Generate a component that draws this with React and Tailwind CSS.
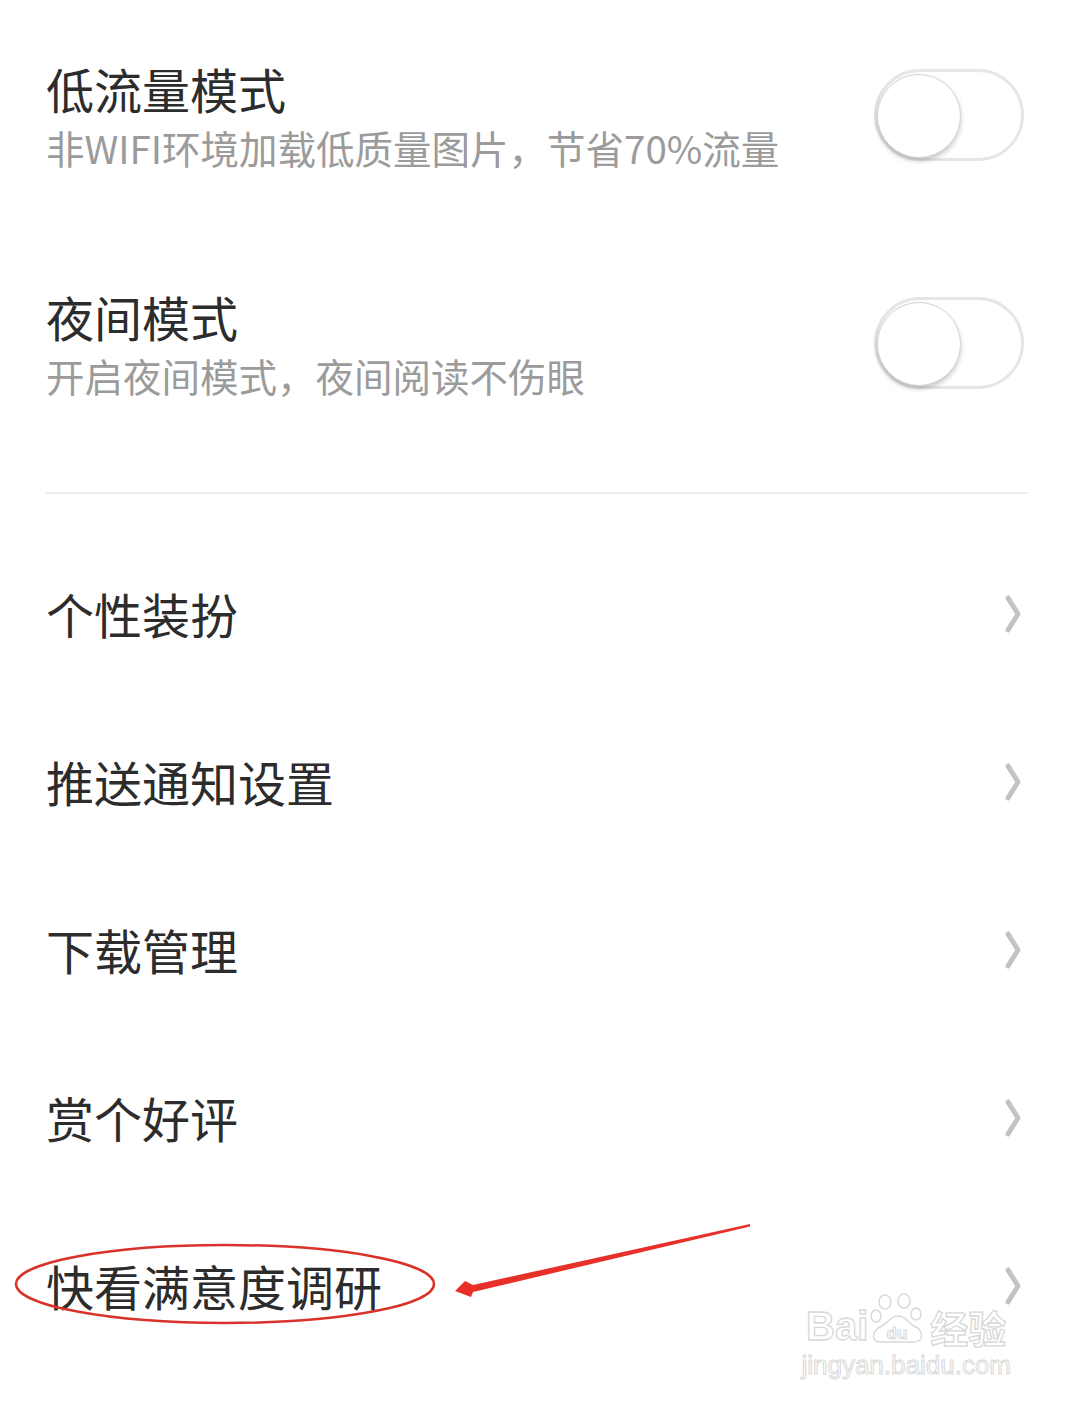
import React from 'react';

const font = { fontFamily: '"Noto Sans CJK SC", "Noto Sans", sans-serif' };

const Toggle = () => (
  <div className="relative h-[92px] w-[150px] rounded-full border-[3px] border-[#e6e6e6] bg-white">
    <div className="absolute left-[0px] top-[2px] h-[84px] w-[84px] rounded-full border border-[#d4d4d4] bg-white shadow-[0_3px_5px_rgba(0,0,0,0.22)]" />
  </div>
);

const Chevron = () => (
  <svg width="22" height="40" viewBox="0 0 22 40" className="mr-[1px]">
    <polyline points="6,4 16,20 6,36" fill="none" stroke="#c3c3c3" strokeWidth="5" strokeLinecap="round" strokeLinejoin="round" />
  </svg>
);

const SwitchRow = ({ title, desc }) => (
  <div className="flex h-[228px] items-center justify-between">
    <div className="flex flex-col">
      <div className="text-[48px] leading-[1.2] text-[#2c2c2c]">{title}</div>
      <div className="mt-[6px] text-[38.5px] leading-[1.2] text-[#9b9b9b]">{desc}</div>
    </div>
    <div className="mr-[1px]">
      <Toggle />
    </div>
  </div>
);

const LinkRow = ({ title, children }) => (
  <div className="relative flex h-[168px] items-center justify-between">
    <div className="text-[48px] leading-[1.2] text-[#2c2c2c]">{title}</div>
    <Chevron />
    {children}
  </div>
);

const Watermark = () => (
  <div className="pointer-events-none absolute right-[58px] bottom-[26px] flex flex-col items-center" style={font}>
    <div className="flex items-end">
      <span className="text-[40px] font-bold leading-none text-transparent [-webkit-text-stroke:1.3px_#d8d8d8]" style={{ fontFamily: '"Liberation Sans", sans-serif' }}>Bai</span>
      <svg width="62" height="58" viewBox="0 0 62 58" className="-mb-[4px]">
        <g fill="none" stroke="#d8d8d8" strokeWidth="1.4">
          <ellipse cx="17" cy="10" rx="6" ry="7" />
          <ellipse cx="36" cy="9" rx="6" ry="7" />
          <ellipse cx="8" cy="24" rx="5" ry="6" />
          <ellipse cx="48" cy="22" rx="5" ry="6" />
          <path d="M12 50 C2 50 4 38 14 34 C20 31 22 24 30 24 C38 24 40 31 46 34 C56 38 56 50 46 50 Z" />
        </g>
        <text x="29" y="47" textAnchor="middle" fontSize="17" fontWeight="700" fill="none" stroke="#d8d8d8" strokeWidth="1" fontFamily="Liberation Sans, sans-serif">du</text>
      </svg>
      <span className="text-[38px] font-bold leading-none text-transparent [-webkit-text-stroke:1.3px_#d8d8d8]">经验</span>
    </div>
    <span className="mt-[6px] text-[26px] leading-none text-transparent [-webkit-text-stroke:1px_#d8d8d8]" style={{ fontFamily: '"Liberation Sans", sans-serif' }}>jingyan.baidu.com</span>
  </div>
);

export default function App() {
  return (
    <div className="relative h-[1404px] w-[1069px] overflow-hidden bg-white" style={font}>
      <div className="pl-[46px] pr-[44px] pt-[1px]">
        <SwitchRow title="低流量模式" desc="非WIFI环境加载低质量图片，节省70%流量" />
        <SwitchRow title="夜间模式" desc="开启夜间模式，夜间阅读不伤眼" />
      </div>
      <div className="ml-[46px] mr-[41px] mt-[35px] h-[2px] bg-[#ececec]" />
      <div className="mt-[36px] pl-[46px] pr-[44px]">
        <LinkRow title="个性装扮" />
        <LinkRow title="推送通知设置" />
        <LinkRow title="下载管理" />
        <LinkRow title="赏个好评" />
        <LinkRow title="快看满意度调研">
          {/* hand-drawn annotation */}
          <svg className="pointer-events-none absolute left-[-46px] top-0 h-[168px] w-[800px] overflow-visible" viewBox="0 0 800 168">
            <ellipse cx="225" cy="82" rx="209" ry="39" fill="none" stroke="#d9322b" strokeWidth="2.5" />
            <polygon points="750,22 750,24.5 473,90 471,95 455,89 465,79 473,83" fill="#e8302a" />
          </svg>
        </LinkRow>
      </div>
      <Watermark />
    </div>
  );
}
